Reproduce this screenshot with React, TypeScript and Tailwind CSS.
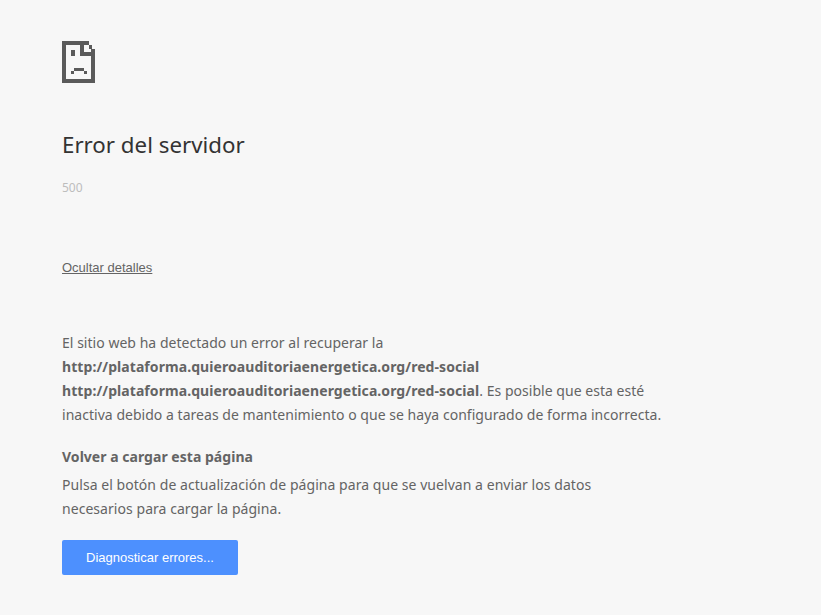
const body = "font-['Noto_Sans',sans-serif]";

function SadTab() {
  return (
    <svg width="34" height="43" viewBox="0 0 34 43" fill="#5a5a5a" shapeRendering="crispEdges">
      <rect x="0" y="0" width="27" height="4" />
      <rect x="0" y="0" width="4" height="42" />
      <rect x="0" y="38" width="33" height="4" />
      <rect x="29" y="8" width="4" height="34" />
      <rect x="27" y="4" width="3" height="4" />
      <rect x="18" y="0" width="4" height="15" />
      <rect x="18" y="11" width="15" height="4" />
      <rect x="9" y="9" width="4" height="6" />
      <rect x="12" y="27" width="10" height="3" />
      <rect x="9" y="30" width="3" height="3" />
      <rect x="22" y="30" width="3" height="3" />
    </svg>
  );
}

export default function App() {
  return (
    <div className="min-h-[615px] bg-[#f7f7f7] pl-[62px] pt-[41px] pr-[150px]">
      <SadTab />
      <h1 className={`${body} mt-[43px] text-[22.3px] leading-[36px] text-[#333333]`}>Error del servidor</h1>
      <p className={`${body} mt-[17px] text-[12px] leading-[16px] text-[#bdbdbd]`}>500</p>
      <a href="#" className="mt-[64px] block font-['Liberation_Sans',sans-serif] text-[13px] leading-[16px] text-[#646464] underline">
        Ocultar detalles
      </a>
      <p className={`${body} mt-[55px] text-[14px] leading-[24px] tracking-[0.03px] text-[#646464]`}>
        El sitio web ha detectado un error al recuperar la
        <br />
        <strong className="tracking-[0.07px]">http://plataforma.quieroauditoriaenergetica.org/red-social</strong>
        <br />
        <strong className="tracking-[0.07px]">http://plataforma.quieroauditoriaenergetica.org/red-social</strong>. Es posible que esta esté
        <br />
        inactiva debido a tareas de mantenimiento o que se haya configurado de forma incorrecta.
      </p>
      <h2 className={`${body} mt-[18px] text-[14px] font-bold leading-[24px] tracking-[0.03px] text-[#646464]`}>Volver a cargar esta página</h2>
      <p className={`${body} mt-[4px] text-[14px] leading-[24px] tracking-[0.05px] text-[#646464]`}>
        Pulsa el botón de actualización de página para que se vuelvan a enviar los datos
        <br />
        necesarios para cargar la página.
      </p>
      <button className="mt-[19px] flex h-[35px] w-[176px] items-center justify-center rounded-[2px] bg-[#4d90fe] font-['Liberation_Sans',sans-serif] text-[13px] text-white">
        Diagnosticar errores...
      </button>
    </div>
  );
}
